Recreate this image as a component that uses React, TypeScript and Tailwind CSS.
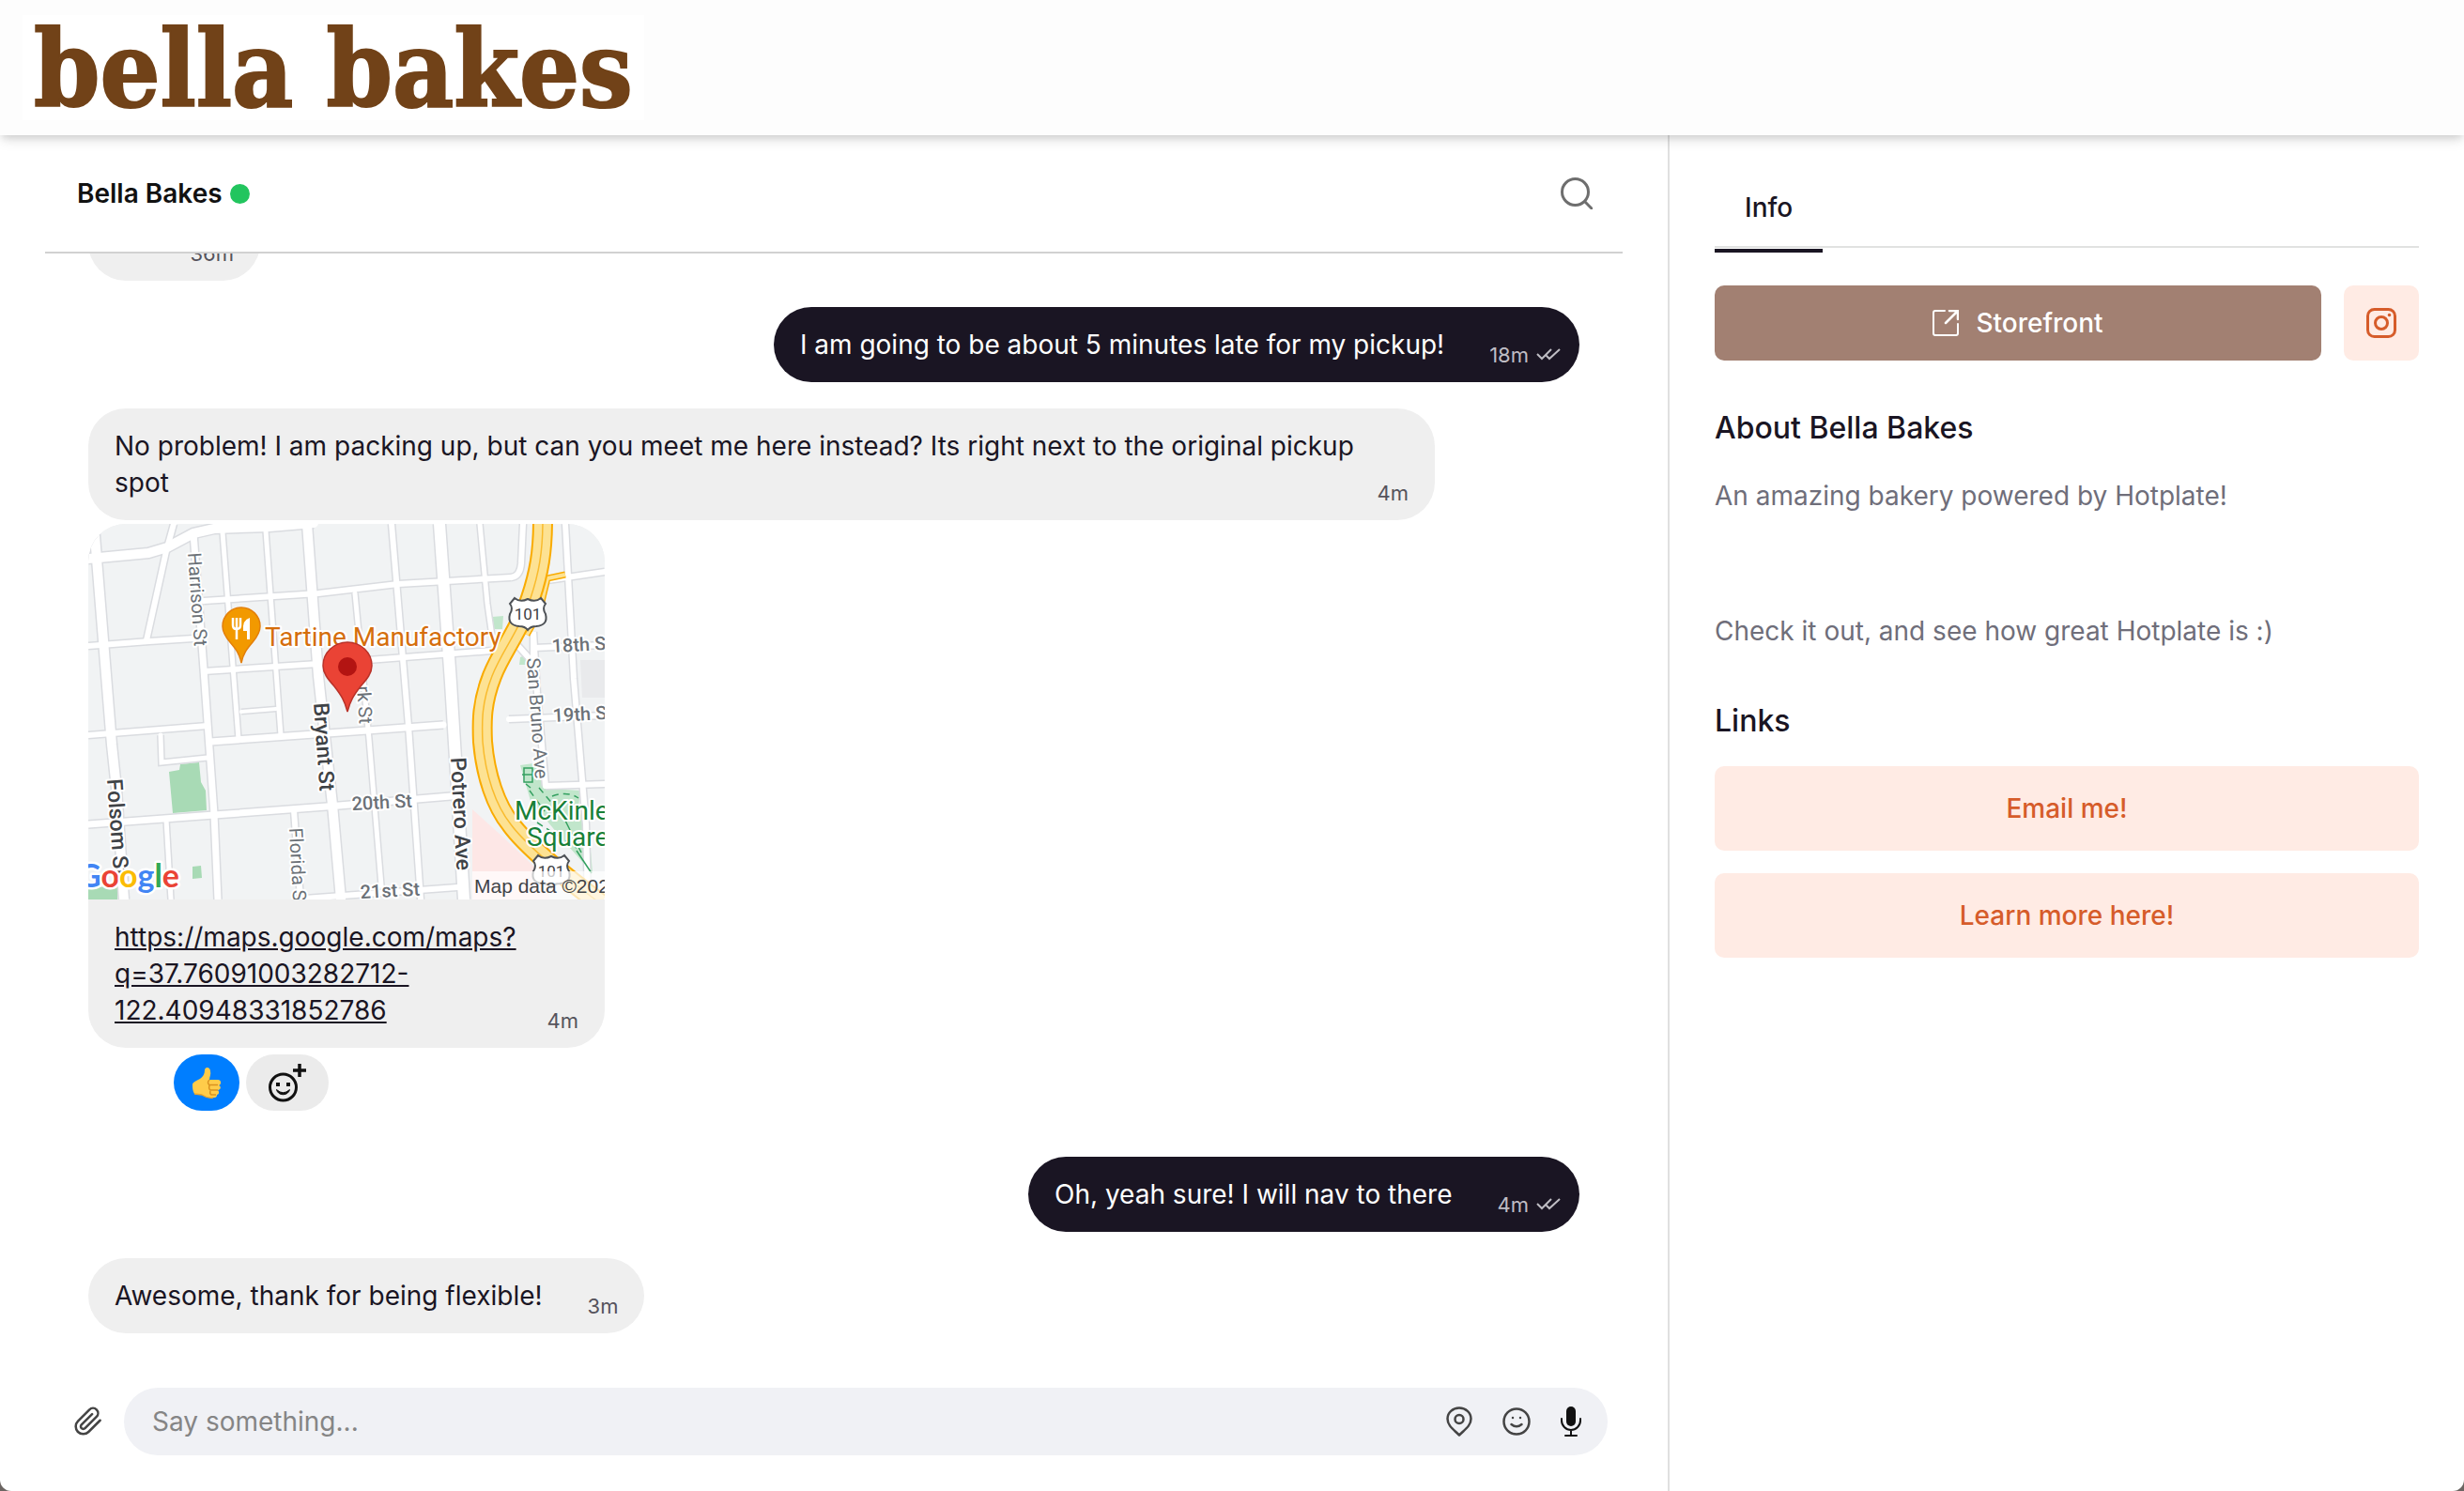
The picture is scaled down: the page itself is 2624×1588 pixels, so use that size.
import type { ReactNode } from "react";
import clsx from "clsx";

type Road = { d: string; w: number };

const ROADS: Road[] = [
  { d: "M6 0 25 235 30 282 38 400", w: 10 },
  { d: "M91 0 83 29 62 124", w: 6 },
  { d: "M0 37 64 31 84 25 112 10 134 5 193 3 240 -1", w: 10 },
  { d: "M112 10 123 155 134 309 138 400", w: 7 },
  { d: "M143 9 160 229", w: 5 },
  { d: "M189 7 205 225", w: 5 },
  { d: "M233 0 245 162 260 299 269 400", w: 10 },
  { d: "M284 74 299 229 312 385", w: 5 },
  { d: "M323 0 341 215 354 400", w: 6 },
  { d: "M374 0 386 169 393 282 400 400", w: 12 },
  { d: "M417 0 425 85 430 120", w: 5 },
  { d: "M463 0 461 42Q460 56 450 57", w: 6 },
  { d: "M508 0 517 165 530 320 532 400", w: 6 },
  { d: "M456 128 474 148 474 115 478 180 487 279", w: 6 },
  { d: "M219 305 226 400", w: 6 },
  { d: "M83 315 88 400", w: 5 },
  { d: "M77 225 78 254 127 249", w: 5 },
  { d: "M163 200 200 197", w: 4 },
  { d: "M123 82 245 74 330 64 450 57", w: 6 },
  { d: "M489 60 550 51", w: 6 },
  { d: "M0 130 65 125 112 122", w: 6 },
  { d: "M123 157 245 149 430 135", w: 6 },
  { d: "M474 132 550 129", w: 6 },
  { d: "M0 225 127 215", w: 6 },
  { d: "M130 232 297 220 378 214", w: 7 },
  { d: "M448 208 550 204", w: 6 },
  { d: "M0 320 134 310 267 300 386 290", w: 7 },
  { d: "M487 279 550 277", w: 6 },
  { d: "M230 399 393 387", w: 6 },
];

const HIGHWAY =
  "M484 -4C484 30 480 52 471 79C460 112 440 136 430 162C419 190 419 210 420 232C423 268 434 300 450 320C466 342 500 370 545 404";

type Label = { text: string; x: number; y: number; turn: number; size: number; fill: string; weight?: number };

const LABELS: Label[] = [
  { text: "Harrison St", x: 106, y: 31, turn: 86, size: 20, fill: "#6b7177" },
  { text: "Bryant St", x: 240, y: 191, turn: 86, size: 23, fill: "#3f4347", weight: 500 },
  { text: "Folsom St", x: 20, y: 272, turn: 86, size: 23, fill: "#3f4347", weight: 500 },
  { text: "Potrero Ave", x: 386, y: 249, turn: 87, size: 23, fill: "#3f4347", weight: 500 },
  { text: "Florida St", x: 214, y: 324, turn: 87, size: 20, fill: "#6b7177" },
  { text: "San Bruno Ave", x: 467, y: 143, turn: 86, size: 20, fill: "#6b7177" },
  { text: "rk St", x: 286, y: 173, turn: 86, size: 20, fill: "#6b7177" },
  { text: "20th St", x: 281, y: 305, turn: -3, size: 20, fill: "#6b7177", weight: 500 },
  { text: "21st St", x: 290, y: 399, turn: -3, size: 20, fill: "#6b7177", weight: 500 },
  { text: "18th St", x: 494, y: 137, turn: -3, size: 20, fill: "#6b7177", weight: 500 },
  { text: "19th St", x: 495, y: 211, turn: -3, size: 20, fill: "#6b7177", weight: 500 },
  { text: "Tartine Manufactory", x: 188, y: 130, turn: 0, size: 28, fill: "#d56e0c" },
  { text: "McKinley", x: 454, y: 315, turn: 0, size: 28, fill: "#188038" },
  { text: "Square", x: 467, y: 343, turn: 0, size: 28, fill: "#188038" },
];

function RouteShield({ x, y }: { x: number; y: number }) {
  return (
    <g transform={`translate(${x} ${y})`}>
      <path
        d="M-14 -17Q-8 -12 0 -16Q8 -12 14 -17L19 -11Q15 -6 19 0Q22 12 9 13Q3 13 0 17Q-3 13 -9 13Q-22 12 -19 0Q-15 -6 -19 -11Z"
        fill="#fff"
        stroke="#4d5156"
        strokeWidth="2"
      />
      <text y="6" textAnchor="middle" fontSize="17" fill="#3c4043">
        101
      </text>
    </g>
  );
}

function LocationMap() {
  return (
    <svg
      viewBox="0 0 550 400"
      role="img"
      aria-label="Map of the pickup spot"
      className="block w-full font-[Roboto,sans-serif]"
    >
      <rect width="550" height="400" fill="#f1f3f4" />
      <path d="M524 145H550V185H526Z" fill="#e9eaec" />
      <path d="M409 304 440 332 480 370 492 400H409Z" fill="#fde7e6" />
      <path d="M86 264 97 262 98 256 118 254 120 275 125 284 126 305 90 308Z" fill="#a8dab5" />
      <path d="M111 365 120 364 121 377 111 378ZM0 388 31 385V400H0Z" fill="#a8dab5" />
      <path
        d="M460 257 474 255 493 282 524 284 522 302 534 335 537 372 504 335 471 295ZM430 99 442 98 441 112 430 112ZM460 142 470 138 466 150 459 150Z"
        fill="#c1e6cb"
      />

      {/* road casings first so crossings stay open */}
      <g fill="none" stroke="#dadce0">
        {ROADS.map((road) => (
          <path key={road.d} d={road.d} strokeWidth={road.w + 3} />
        ))}
      </g>
      <g fill="none" stroke="#fff" strokeLinecap="round">
        {ROADS.map((road) => (
          <path key={road.d} d={road.d} strokeWidth={road.w} />
        ))}
      </g>

      {/* park paths */}
      <g fill="none" stroke="#34a060" strokeWidth="1.5">
        <path d="M464 260H473V275H464ZM462 267H475M466 277 471 281" />
        <path d="M470 284 486 306M480 281 500 305M494 290Q510 284 522 292M478 318 520 345" strokeDasharray="7 5" />
        <path d="M500 300 525 350M520 348 536 372" />
      </g>

      {/* freeway */}
      <g fill="none">
        <path d="M508 54 489 58 480 95 467 118" stroke="#f9ab00" strokeWidth="7" />
        <path d="M508 54 489 58 480 95 467 118" stroke="#fde293" strokeWidth="4" />
        <path d={HIGHWAY} stroke="#f9ab00" strokeWidth="22" />
        <path d={HIGHWAY} stroke="#fde293" strokeWidth="18" />
        <path d={HIGHWAY} stroke="#f9bb2d" strokeWidth="1.5" />
      </g>

      <RouteShield x={468} y={96} />
      <RouteShield x={493} y={370} />

      {LABELS.map((label) => (
        <text
          key={label.text}
          transform={`translate(${label.x} ${label.y}) rotate(${label.turn})`}
          fontSize={label.size}
          fontWeight={label.weight ?? 400}
          fill={label.fill}
          stroke="#fff"
          strokeWidth="4"
          strokeLinejoin="round"
          paintOrder="stroke"
        >
          {label.text}
        </text>
      ))}

      {/* restaurant pin */}
      <path
        d="M163 148C161 138 157 133 151 126C146 120 143 115 143 109A20 20 0 0 1 183 109C183 115 180 120 175 126C169 133 165 138 163 148Z"
        fill="#f29900"
        stroke="#e37f0a"
        strokeWidth="1.5"
      />
      <path d="M154 100V108Q154 112 158 112T162 108V100M158 100V123" fill="none" stroke="#fff" strokeWidth="2.5" />
      <path d="M172 123H169V114H165Q164 102 172 100Z" fill="#fff" />

      {/* dropped pin */}
      <path
        d="M276 200C273 188 269 182 262 173C255 165 250 159 250 151A26 25 0 0 1 302 151C302 159 297 165 290 173C283 182 279 188 276 200Z"
        fill="#ea4335"
        stroke="#b93229"
        strokeWidth="1.5"
      />
      <circle cx="276" cy="152" r="10" fill="#b31412" />

      <rect x="409" y="370" width="141" height="30" fill="#fff" fillOpacity="0.7" />
      <text x="411" y="393" fontSize="21" fill="#3f4347" className="font-['Liberation_Sans',sans-serif]">
        Map data ©2022
      </text>
      <text
        x="97"
        y="387"
        textAnchor="end"
        fontSize="34"
        fontWeight="700"
        stroke="#fff"
        strokeWidth="5"
        strokeLinejoin="round"
        paintOrder="stroke"
        className="font-[Lato,sans-serif]"
      >
        <tspan fill="#4285f4">G</tspan>
        <tspan fill="#ea4335">o</tspan>
        <tspan fill="#fbbc04">o</tspan>
        <tspan fill="#4285f4">g</tspan>
        <tspan fill="#34a853">l</tspan>
        <tspan fill="#ea4335">e</tspan>
      </text>
    </svg>
  );
}

function SearchIcon() {
  return (
    <svg viewBox="0 0 34 34" fill="none" stroke="#6e6e6e" strokeWidth="3" className="size-[34px]">
      <circle cx="15.500" cy="15.500" r="14" />
      <path d="m25 25 9 9" />
    </svg>
  );
}

function ReadTicks() {
  return (
    <svg viewBox="0 0 26 14" fill="none" stroke="currentColor" strokeWidth="2" className="h-[14px] w-[26px]">
      <path d="m1 6 5 5L16 1M10 7l4 4L25 1" />
    </svg>
  );
}

function ThumbsUp() {
  return (
    <svg viewBox="0 0 32 34" className="h-[34px] w-8">
      <path
        d="M1 19C1 17 5 15 9 13C12 11 14 8 14 4C14 0 20 0 20 5C21 8 19 11 19 14H28C32 14 32 19 29 20C32 21 31 25 28 25C30 27 29 30 27 30C27 33 25 33 23 33C17 34 14 32 11 30L3 29C1 26 1 22 1 19Z"
        fill="#ffcc4a"
      />
      <path d="M19 14C17 16 17 18 19 19.500H28M19 20Q18 24 20 25H28M20 26Q19 29 21 30H26" fill="none" stroke="#d99220" strokeWidth="1.500" />
      <path d="M3 29 11 30C14 32 17 34 23 33" fill="none" stroke="#eaa52c" strokeWidth="1.500" />
    </svg>
  );
}

function AddReactionIcon() {
  return (
    <svg viewBox="0 0 41 41" fill="none" stroke="#111" strokeWidth="3" className="size-[41px]">
      <circle cx="15.500" cy="25" r="14" />
      <path d="M8.500 27.500C10 34.500 21 34.500 22.500 27.500Q15.500 34 8.500 27.500Z" fill="#111" strokeWidth="1" />
      <path d="M8 22h4M19 22h4" strokeWidth="4" />
      <path d="M33 0v14M26 7h14" strokeWidth="3.500" />
    </svg>
  );
}

function PaperclipIcon() {
  return (
    <svg viewBox="0 0 24 24" fill="none" stroke="#444" strokeWidth="1.900" strokeLinecap="round" strokeLinejoin="round" className="size-8">
      <path d="m21.440 11.050-9.190 9.190a6 6 0 0 1-8.490-8.490l9.190-9.190a4 4 0 0 1 5.660 5.660l-9.200 9.190a2 2 0 0 1-2.830-2.830l8.490-8.480" />
    </svg>
  );
}

function PinIcon() {
  return (
    <svg viewBox="0 0 28 32" fill="none" stroke="#444" strokeWidth="2.500" strokeLinejoin="round" className="h-8 w-7">
      <path d="M14 30.500C8 24.500 1.500 20.500 1.500 13A12.500 11.500 0 0 1 26.500 13C26.500 20.500 20 24.500 14 30.500Z" />
      <circle cx="14" cy="13.500" r="4.500" />
    </svg>
  );
}

function SmileIcon() {
  return (
    <svg viewBox="0 0 30 30" fill="none" stroke="#444" strokeWidth="2.500" strokeLinecap="round" className="size-[30px]">
      <circle cx="15" cy="15" r="13.500" />
      <path d="M9.500 18Q15 22.500 20.500 18" />
      <path d="M11 11h.01M19 11h.01" />
    </svg>
  );
}

function MicIcon() {
  return (
    <svg viewBox="0 0 22 32" fill="none" stroke="#111" strokeWidth="2" strokeLinecap="round" className="h-8 w-[22px]">
      <rect x="6" y="0" width="10" height="21" rx="5" fill="#111" stroke="none" />
      <path d="M1 13v2a10 10 0 0 0 20 0v-2M11 25v6M5 31h12" />
    </svg>
  );
}

function StorefrontIcon() {
  return (
    <svg viewBox="0 0 28 28" fill="none" stroke="currentColor" strokeWidth="2" strokeLinecap="round" className="size-7">
      <path d="M13 1H3Q1 1 1 3V25Q1 27 3 27H25Q27 27 27 25V15" />
      <path d="M18 1h9v9M26 2 14 14" strokeWidth="2.500" />
    </svg>
  );
}

function InstagramIcon() {
  return (
    <svg viewBox="0 0 32 32" fill="none" stroke="currentColor" strokeWidth="3" className="size-8">
      <rect x="1.500" y="1.500" width="29" height="29" rx="7" />
      <circle cx="16" cy="16" r="6.500" />
      <circle cx="24.500" cy="7.500" r="1.750" fill="currentColor" stroke="none" />
    </svg>
  );
}

type BubbleProps = {
  time: string;
  sent?: boolean;
  attachment?: ReactNode;
  className?: string;
  children?: ReactNode;
};

function Bubble({ time, sent, attachment, className, children }: BubbleProps) {
  return (
    <div
      className={clsx(
        "max-w-[1434px] shrink-0 overflow-hidden rounded-[40px] text-[28px] leading-[39px]",
        sent ? "self-end bg-[#1a1523] text-white" : "self-start bg-[#efefef] text-[#1a1523]",
        className
      )}
    >
      {attachment}
      <div className="min-h-20 px-7 pt-[21px] pb-5">
        {children}
        <span
          className={clsx(
            "float-right mt-[22px] ml-12 flex h-4 items-center gap-2 text-[22px] leading-4",
            sent ? "-mr-2 text-[#bfbdc4]" : "text-[#55535c]"
          )}
        >
          {time}
          {sent && <ReadTicks />}
        </span>
      </div>
    </div>
  );
}

function Chat() {
  return (
    <main className="flex min-w-0 flex-1 flex-col">
      <div className="mx-12 flex h-[126px] shrink-0 items-center justify-between border-b-2 border-[#d1d1d1] pr-8 pl-[34px]">
        <h1 className="flex items-center gap-2 text-[28px] font-semibold text-[#111]">
          Bella Bakes
          <span className="size-[21px] rounded-full bg-[#22c55e]" />
        </h1>
        <button type="button" aria-label="Search messages">
          <SearchIcon />
        </button>
      </div>

      <div className="flex min-h-0 flex-1 flex-col justify-end gap-7 overflow-hidden px-[94px] pb-[58px]">
        <Bubble time="36m" className="w-[183px]" />
        <Bubble time="18m" sent>
          I am going to be about 5 minutes late for my pickup!
        </Bubble>
        <div className="flex flex-col gap-1">
          <Bubble time="4m">
            No problem! I am packing up, but can you meet me here instead? Its right next to the original pickup spot
          </Bubble>
          <Bubble time="4m" className="w-[550px]" attachment={<LocationMap />}>
            <a href="https://maps.google.com/maps?q=37.76091003282712-122.40948331852786" className="underline">
              https://maps.google.com/maps?q=37.76091003282712-122.40948331852786
            </a>
          </Bubble>
          <div className="mt-[3px] mb-[21px] flex gap-[7px] pl-[91px]">
            <button
              type="button"
              aria-label="Thumbs up"
              className="flex h-[60px] w-[70px] items-center justify-center rounded-full bg-[#007eff]"
            >
              <ThumbsUp />
            </button>
            <button
              type="button"
              aria-label="Add reaction"
              className="flex h-[60px] w-[88px] items-center justify-center rounded-full bg-[#ebebeb]"
            >
              <AddReactionIcon />
            </button>
          </div>
        </div>
        <Bubble time="4m" sent>
          Oh, yeah sure! I will nav to there
        </Bubble>
        <Bubble time="3m">Awesome, thank for being flexible!</Bubble>
      </div>

      <form className="flex shrink-0 items-center gap-[22px] pr-16 pb-[38px] pl-[78px]">
        <button type="button" aria-label="Attach a file">
          <PaperclipIcon />
        </button>
        <div className="flex h-[72px] flex-1 items-center rounded-full bg-[#f0f1f5] pr-7 pl-[30px]">
          <input
            type="text"
            aria-label="Message"
            placeholder="Say something..."
            className="min-w-0 flex-1 bg-transparent text-[28px] text-[#111] outline-none placeholder:text-[#858585]"
          />
          <div className="flex items-center gap-8">
            <button type="button" aria-label="Share location">
              <PinIcon />
            </button>
            <button type="button" aria-label="Insert emoji">
              <SmileIcon />
            </button>
            <button type="button" aria-label="Record voice message">
              <MicIcon />
            </button>
          </div>
        </div>
      </form>
    </main>
  );
}

const LINKS = ["Email me!", "Learn more here!"];

function InfoPanel() {
  return (
    <aside className="w-[848px] shrink-0 border-l-2 border-[#e0e0e0] px-12 pt-12 text-[28px] text-[#1a1523]">
      <div role="tablist" className="flex border-b-2 border-[#e1e2e1]">
        <button
          type="button"
          role="tab"
          aria-selected="true"
          className="-mb-[7px] border-b-4 border-[#1a1523] px-8 pt-[9px] pb-6 leading-10 font-medium"
        >
          Info
        </button>
      </div>

      <div className="mt-10 flex gap-6">
        <a
          href="#storefront"
          className="flex h-20 flex-1 items-center justify-center gap-[18px] rounded-[10px] bg-[#a28072] font-medium text-white"
        >
          <StorefrontIcon />
          Storefront
        </a>
        <a
          href="#instagram"
          aria-label="Instagram"
          className="flex size-20 items-center justify-center rounded-[10px] bg-[#ffebe4] text-[#d65c2a]"
        >
          <InstagramIcon />
        </a>
      </div>

      <h2 className="mt-[52px] text-[32px] leading-10 font-medium">About Bella Bakes</h2>
      <div className="mt-[34px] flex flex-col gap-[108px] leading-9 text-[#6f6e7a]">
        <p>An amazing bakery powered by Hotplate!</p>
        <p>Check it out, and see how great Hotplate is :)</p>
      </div>

      <h2 className="mt-[58px] text-[32px] leading-10 font-medium">Links</h2>
      <div className="mt-7 flex flex-col gap-6">
        {LINKS.map((link) => (
          <a
            key={link}
            href="#links"
            className="flex h-[90px] items-center justify-center rounded-[10px] bg-[#ffebe4] font-medium text-[#d65c2a]"
          >
            {link}
          </a>
        ))}
      </div>
    </aside>
  );
}

export default function App() {
  return (
    <div className="h-screen bg-[#6b6562] font-[Inter,sans-serif]">
      <div className="flex h-full flex-col overflow-hidden rounded-b-xl bg-white">
        <header className="z-10 flex h-36 shrink-0 items-center bg-[#fdfdfd] px-6 shadow-[0_8px_12px_-2px_rgba(0,0,0,0.1),0_4px_8px_-2px_rgba(0,0,0,0.12)]">
          <div className="flex h-28 items-center bg-white px-3 pt-1 font-['DejaVu_Serif_Condensed','DejaVu_Serif',serif] text-[112px] leading-none font-bold text-[#714218] [-webkit-text-stroke:2px_#714218]">
            bella bakes
          </div>
        </header>
        <div className="flex min-h-0 flex-1">
          <Chat />
          <InfoPanel />
        </div>
      </div>
    </div>
  );
}
